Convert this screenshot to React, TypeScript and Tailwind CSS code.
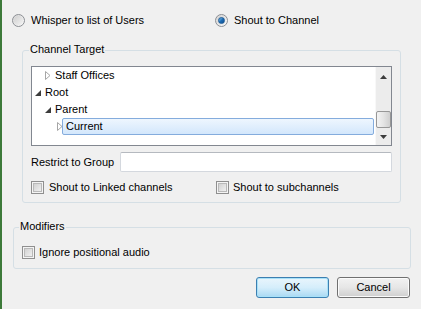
import React from "react";

const font = { fontFamily: '"Liberation Sans", Arial, sans-serif' };

function Radio({ checked }: { checked?: boolean }) {
  return (
    <div className="w-[13px] h-[13px] rounded-full border border-[#8c8f94] bg-gradient-to-br from-[#d6d6d6] to-[#fbfbfb] flex items-center justify-center shrink-0">
      <div className="w-[9px] h-[9px] rounded-full bg-gradient-to-br from-[#cfcfcf] to-[#f4f4f4] flex items-center justify-center">
        {checked && (
          <div className="w-[7px] h-[7px] rounded-full bg-gradient-to-br from-[#7fc6f2] via-[#1d6db5] to-[#0f4d8f] border border-[#1b5a96]" />
        )}
      </div>
    </div>
  );
}

function Check() {
  return (
    <div className="w-[13px] h-[13px] border border-[#8f8f8f] bg-[#f4f4f4] flex items-center justify-center shrink-0">
      <div className="w-[9px] h-[9px] border border-[#b9b9b9] bg-gradient-to-br from-[#d2d2d2] to-[#f0f0f0]" />
    </div>
  );
}

function Collapsed() {
  return (
    <svg width="6" height="9" viewBox="0 0 6 9" className="shrink-0">
      <path d="M0.5 0.5 L5 4.5 L0.5 8.5 Z" fill="white" stroke="#a6a6a6" />
    </svg>
  );
}

function Expanded() {
  return (
    <svg width="6" height="6" viewBox="0 0 6 6" className="shrink-0">
      <path d="M6 0 L6 6 L0 6 Z" fill="#3c3c3c" />
    </svg>
  );
}

function Group({
  label,
  labelLeft,
  className,
  children,
}: {
  label: string;
  labelLeft: string;
  className: string;
  children: React.ReactNode;
}) {
  return (
    <div className={"relative border border-[#d5dfe5] rounded-[3px] " + className}>
      <span
        className={"absolute -top-[9px] bg-[#f0f0f0] px-[1px] leading-[15px] text-[11px] text-black " + labelLeft}
      >
        {label}
      </span>
      {children}
    </div>
  );
}

export default function App() {
  return (
    <div className="w-[421px] h-[309px] bg-[#f0f0f0] flex overflow-hidden text-[11px] text-black" style={font}>
      <div className="w-[2px] h-full bg-[#3d7a3a]" />
      <div className="flex-1 flex flex-col">
        {/* radios */}
        <div className="flex items-center mt-[14px] h-[13px] pl-[10px]">
          <div className="flex items-center gap-[6px] w-[203px]">
            <Radio />
            <span>Whisper to list of Users</span>
          </div>
          <div className="flex items-center gap-[6px]">
            <Radio checked />
            <span>Shout to Channel</span>
          </div>
        </div>

        {/* Channel target */}
        <Group label="Channel Target" labelLeft="left-[6px]" className="mt-[23px] ml-[20px] w-[379px] h-[153px]">
          <div className="ml-[8px] mt-[15px] w-[361px] h-[80px] border border-[#828790] bg-white flex">
            <div className="flex-1 flex flex-col">
              <div className="h-[17px] flex items-center pl-[13px] gap-[4px]">
                <Collapsed />
                <span>Staff Offices</span>
              </div>
              <div className="h-[17px] flex items-center pl-[3px] gap-[4px]">
                <Expanded />
                <span>Root</span>
              </div>
              <div className="h-[17px] flex items-center pl-[13px] gap-[4px]">
                <Expanded />
                <span>Parent</span>
              </div>
              <div className="h-[17px] flex items-center pl-[25px]">
                <Collapsed />
                <div className="ml-[-1px] flex-1 mr-[1px] h-[17px] flex items-center pl-[3px] border border-[#84acdd] rounded-[2px] bg-gradient-to-b from-[#eef6fe] to-[#d3e7fc]">
                  Current
                </div>
              </div>
            </div>
            <div className="w-[16px] h-full bg-[#ececec] border-l border-[#f8f8f8] flex flex-col items-center">
              <div className="h-[17px] w-full flex items-center justify-center mt-[1px]">
                <svg width="7" height="4" viewBox="0 0 7 4">
                  <path d="M3.5 0 L7 4 L0 4 Z" fill="#3c3c3c" />
                </svg>
              </div>
              <div className="flex-1" />
              <div className="w-[15px] h-[17px] rounded-[2px] border border-[#979797] bg-gradient-to-r from-[#f3f3f3] via-[#e4e4e4] to-[#cfcfcf]" />
              <div className="h-[17px] w-full flex items-center justify-center">
                <svg width="7" height="4" viewBox="0 0 7 4">
                  <path d="M0 0 L7 0 L3.5 4 Z" fill="#3c3c3c" />
                </svg>
              </div>
            </div>
          </div>

          <div className="mt-[6px] ml-[8px] h-[20px] flex items-center">
            <span className="w-[89px]">Restrict to Group</span>
            <div className="w-[272px] h-[20px] bg-white border border-[#d4d8de] border-t-[#b5b9bf] rounded-[2px]" />
          </div>

          <div className="mt-[9px] ml-[8px] h-[13px] flex items-center">
            <div className="flex items-center gap-[5px] w-[185px]">
              <Check />
              <span>Shout to Linked channels</span>
            </div>
            <div className="flex items-center gap-[4px]">
              <Check />
              <span>Shout to subchannels</span>
            </div>
          </div>
        </Group>

        {/* Modifiers */}
        <Group label="Modifiers" labelLeft="left-[5px]" className="mt-[24px] ml-[11px] w-[398px] h-[42px]">
          <div className="mt-[18px] ml-[8px] flex items-center gap-[4px] h-[13px]">
            <Check />
            <span>Ignore positional audio</span>
          </div>
        </Group>

        {/* Buttons */}
        <div className="mt-[8px] flex justify-end gap-[8px] pr-[11px]">
          <div className="w-[73px] h-[21px] rounded-[3px] border border-[#3c7fb1] bg-gradient-to-b from-[#e9f5fc] via-[#d5eefb] to-[#a9d9f3] flex items-center justify-center shadow-[inset_0_0_0_1px_#a8e1f8]">
            OK
          </div>
          <div className="w-[73px] h-[21px] rounded-[3px] border border-[#707070] bg-gradient-to-b from-[#f2f2f2] via-[#e6e6e6] to-[#cfcfcf] flex items-center justify-center shadow-[inset_0_0_0_1px_#fbfbfb]">
            Cancel
          </div>
        </div>
      </div>
    </div>
  );
}
